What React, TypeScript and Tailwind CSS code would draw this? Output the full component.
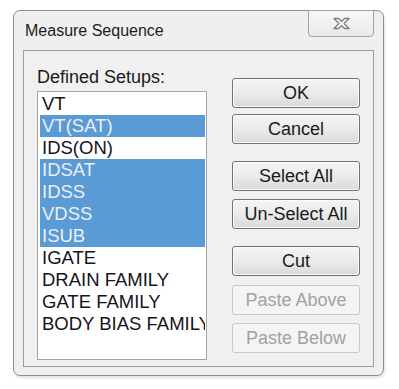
import React from 'react';

type Setup = { name: string; selected: boolean };

const setups: Setup[] = [
  { name: 'VT', selected: false },
  { name: 'VT(SAT)', selected: true },
  { name: 'IDS(ON)', selected: false },
  { name: 'IDSAT', selected: true },
  { name: 'IDSS', selected: true },
  { name: 'VDSS', selected: true },
  { name: 'ISUB', selected: true },
  { name: 'IGATE', selected: false },
  { name: 'DRAIN FAMILY', selected: false },
  { name: 'GATE FAMILY', selected: false },
  { name: 'BODY BIAS FAMILY', selected: false },
];

const buttons = [
  { label: 'OK', gap: 'mt-0', disabled: false },
  { label: 'Cancel', gap: 'mt-[6px]', disabled: false },
  { label: 'Select All', gap: 'mt-[17px]', disabled: false },
  { label: 'Un-Select All', gap: 'mt-[8px]', disabled: false },
  { label: 'Cut', gap: 'mt-[17px]', disabled: false },
  { label: 'Paste Above', gap: 'mt-[9px]', disabled: true },
  { label: 'Paste Below', gap: 'mt-[8px]', disabled: true },
];

function CloseGlyph() {
  return (
    <svg width="19" height="13" viewBox="0 0 19 13">
      <path
        d="M2 1.5 H6.5 L9.5 4.5 L12.5 1.5 H17 L12 6.5 L17 11.5 H12.5 L9.5 8.5 L6.5 11.5 H2 L7 6.5 Z"
        fill="#ffffff"
        stroke="#7d7d7d"
        strokeWidth="1.3"
        strokeLinejoin="round"
      />
    </svg>
  );
}

export default function App() {
  return (
    <div className="w-[399px] h-[389px] bg-white pl-[13px] pt-[10px] font-['Liberation_Sans',Arial,sans-serif]">
      <div className="w-[371px] h-[366px] flex flex-col rounded-[7px] border border-[#8e8e8e] bg-[#efefef] shadow-[1px_2px_3px_rgba(0,0,0,0.12)]">
        <div className="h-[39px] flex items-start justify-between pl-[11px] pr-[9px]">
          <span className="mt-[10px] text-[16px] leading-[20px] text-[#1c1c1c]">Measure Sequence</span>
          <div className="-mt-px h-[27px] w-[66px] flex items-center justify-center rounded-b-[4px] border border-[#a3a3a3] bg-gradient-to-b from-[#f7f7f7] to-[#e9e9e9]">
            <CloseGlyph />
          </div>
        </div>

        <div className="mx-[9px] h-[317px] flex items-start border border-[#9c9c9c] bg-[#f0f0f0] pl-[13px] pt-[15px]">
          <div className="flex flex-col">
            <span className="text-[18px] leading-[22px] text-[#1a1a1a]">Defined Setups:</span>
            <div className="mt-[3px] w-[170px] h-[269px] border border-[#a5a5a5] bg-white pl-[2px] pr-[1px] pt-[1px]">
              {setups.map((s) => (
                <div
                  key={s.name}
                  className={`h-[22px] pl-[2px] overflow-hidden whitespace-nowrap text-[18.5px] leading-[22px] ${
                    s.selected ? 'bg-[#5b9bd5] text-[#e9eff8]' : 'text-[#141420]'
                  }`}
                >
                  {s.name}
                </div>
              ))}
            </div>
          </div>

          <div className="ml-[25px] mt-[12px] flex flex-col">
            {buttons.map((b) => (
              <div
                key={b.label}
                className={`${b.gap} w-[128px] h-[30px] flex items-center justify-center rounded-[3px] border text-[18px] leading-[22px] ${
                  b.disabled
                    ? 'border-[#c9c9c9] bg-[#f4f4f4] text-[#a2a2a2]'
                    : 'border-[#727272] bg-gradient-to-b from-[#f4f4f4] via-[#ebebeb] to-[#d9d9d9] text-[#1a1a1a] shadow-[inset_0_0_0_1px_#fbfbfb]'
                }`}
              >
                {b.label}
              </div>
            ))}
          </div>
        </div>
      </div>
    </div>
  );
}
